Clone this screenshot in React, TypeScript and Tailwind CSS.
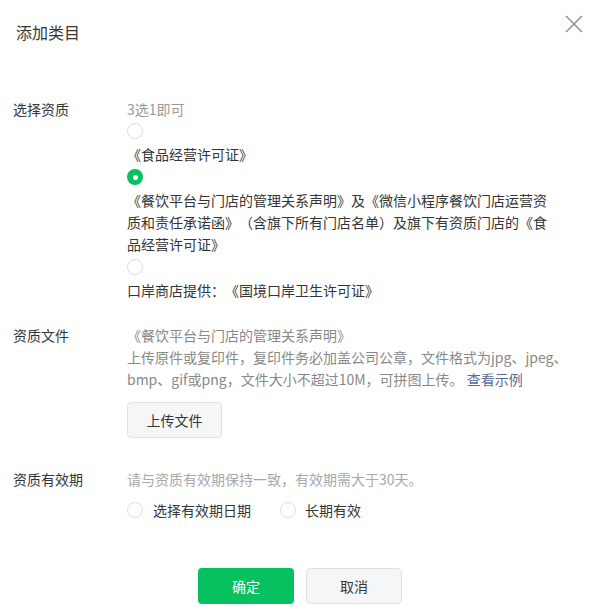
import React, { useState } from 'react';

const font = { fontFamily: '"Noto Sans CJK SC", "Noto Sans", sans-serif' };

function Radio({ checked }: { checked?: boolean }) {
  return checked ? (
    <span className="w-4 h-4 rounded-full bg-[#07c160] flex items-center justify-center shrink-0">
      <span className="w-[5px] h-[5px] rounded-full bg-white" />
    </span>
  ) : (
    <span className="w-4 h-4 rounded-full border border-[#dedede] bg-white shrink-0" />
  );
}

export default function App() {
  const [qual, setQual] = useState(1);
  const [period, setPeriod] = useState<number | null>(null);

  const options = [
    <>《食品经营许可证》</>,
    <>
      《餐饮平台与门店的管理关系声明》及《微信小程序餐饮门店运营资
      <br />
      质和责任承诺函》（含旗下所有门店名单）及旗下有资质门店的《食
      <br />
      品经营许可证》
    </>,
    <>口岸商店提供：《国境口岸卫生许可证》</>,
  ];

  return (
    <div
      className="w-[593px] h-[610px] bg-white relative text-[14px] leading-[22px] text-[#353535] [text-spacing-trim:space-all]"
      style={font}
    >
      {/* Header */}
      <div className="flex justify-between items-start">
        <h3 className="mt-[21px] ml-[16px] text-[16px] leading-[22px] font-normal text-[#353535]">添加类目</h3>
        <button className="mt-[15px] mr-[10px] w-[18px] h-[18px] text-[#8a8a8a]">
          <svg viewBox="0 0 18 18" width="18" height="18" fill="none" stroke="currentColor" strokeWidth="1.4">
            <path d="M1 1L17 17M17 1L1 17" />
          </svg>
        </button>
      </div>

      {/* Qualification */}
      <div className="flex mt-[55px]">
        <div className="w-[127px] pl-[13px] shrink-0">选择资质</div>
        <div className="flex flex-col">
          <div className="text-[#9a9a9a]">3选1即可</div>
          {options.map((opt, i) => (
            <div key={i} className={i > 0 ? 'mt-px' : ''} onClick={() => setQual(i)}>
              <div className="h-[22px] flex items-center cursor-pointer">
                <Radio checked={qual === i} />
              </div>
              <div className="mt-px">{opt}</div>
            </div>
          ))}
        </div>
      </div>

      {/* Files */}
      <div className="flex mt-[23px]">
        <div className="w-[127px] pl-[13px] shrink-0">资质文件</div>
        <div className="flex flex-col text-[#888888]">
          <div>《餐饮平台与门店的管理关系声明》</div>
          <div>
            上传原件或复印件，复印件务必加盖公司公章，文件格式为jpg、jpeg、
            <br />
            bmp、gif或png，文件大小不超过10M，可拼图上传。 <a className="text-[#576b95] cursor-pointer">查看示例</a>
          </div>
          <button className="mt-[12px] w-[95px] h-[36px] rounded-[4px] border border-[#e2e2e2] bg-[#f5f6f8] text-[#353535]">
            上传文件
          </button>
        </div>
      </div>

      {/* Validity */}
      <div className="flex mt-[30px]">
        <div className="w-[127px] pl-[13px] shrink-0">资质有效期</div>
        <div className="flex flex-col">
          <div className="text-[#a8a8a8]">请与资质有效期保持一致，有效期需大于30天。</div>
          <div className="flex items-center mt-[9px] h-[22px]">
            <label className="flex items-center gap-[10px] cursor-pointer" onClick={() => setPeriod(0)}>
              <Radio checked={period === 0} />
              <span>选择有效期日期</span>
            </label>
            <label className="flex items-center gap-[9px] ml-[29px] cursor-pointer" onClick={() => setPeriod(1)}>
              <Radio checked={period === 1} />
              <span>长期有效</span>
            </label>
          </div>
        </div>
      </div>

      {/* Footer */}
      <div className="flex justify-center gap-3 mt-[47px] pl-[7px]">
        <button className="w-[96px] h-[36px] rounded-[4px] bg-[#07c160] text-white">确定</button>
        <button className="w-[96px] h-[36px] rounded-[4px] border border-[#e2e2e2] bg-[#f5f6f8] text-[#353535]">
          取消
        </button>
      </div>
    </div>
  );
}
